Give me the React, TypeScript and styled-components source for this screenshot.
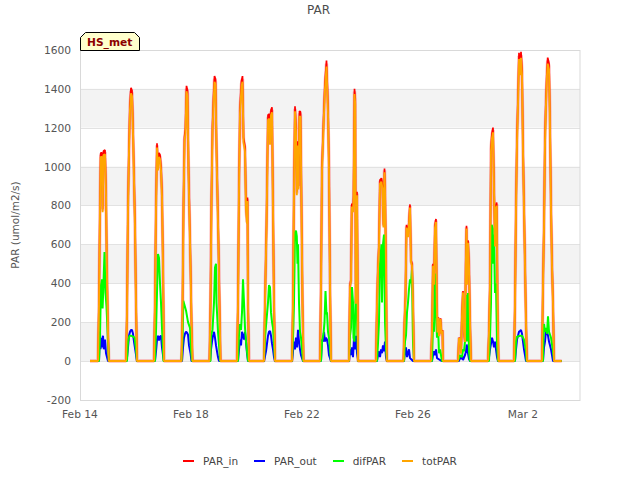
import React from "react";
import styled, { createGlobalStyle } from "styled-components";

const Global = createGlobalStyle`
  html, body { margin: 0; padding: 0; background: #fff; }
  #root { width: 640px; height: 480px; }
`;

const Page = styled.div`
  width: 640px;
  height: 480px;
  display: flex;
  flex-direction: column;
  overflow: hidden;
  font-family: "DejaVu Sans", sans-serif;
  color: #333;
`;

const Title = styled.h1`
  margin: 0;
  height: 20px;
  line-height: 20px;
  text-align: center;
  font-size: 12px;
  font-weight: 400;
  color: #4d4d4d;
  padding-right: 3px;
`;

const Chart = styled.svg`
  display: block;
  width: 640px;
  height: 430px;
  flex: none;
`;

const Tick = styled.text`
  font-family: "DejaVu Sans", sans-serif;
  font-size: 10.67px;
  fill: #555;
`;

const AxisTitle = styled.text`
  font-family: "DejaVu Sans", sans-serif;
  font-size: 10.5px;
  fill: #555;
`;

const TagLabel = styled.text`
  font-family: "DejaVu Sans", sans-serif;
  font-size: 10.67px;
  font-weight: 700;
  fill: #8b0000;
`;

const Legend = styled.ul`
  list-style: none;
  margin: 0;
  padding: 2px 0 0;
  display: flex;
  justify-content: center;
  gap: 16px;
  height: 28px;
  box-sizing: border-box;
  align-items: flex-start;
`;

const LegendItem = styled.li`
  display: flex;
  align-items: center;
  gap: 9px;
  font-size: 10.5px;
  line-height: 18px;
  color: #444;
`;

const Swatch = styled.span<{ $color: string }>`
  display: block;
  width: 11px;
  height: 2px;
  background: ${(p) => p.$color};
`;

const tot = [
  "98:0 99:300 100:800 100.7:1070 102:1070 102.6:780 103.5:1080 105:1085 106:870 106.8:500 108:150 108.8:0",
  "126:0 127:250 128:800 129:1100 130:1320 131:1405 132:1390 133:1200 134:950 135:700 136:300 137:0",
  "154:0 155:300 156:800 157:1120 158:1000 159:1070 160:1060 161:1000 162:860 163:500 164:0",
  "181.5:0 182.5:250 183.5:800 184.5:1150 185.5:1200 186.5:1415 187.5:1390 188.5:1000 189.5:750 190.5:500 191.5:200 192.5:0",
  "209.5:0 210.5:300 211.5:850 212.5:1200 213.5:1350 214.5:1465 215.5:1450 216.5:1100 217.5:850 218.5:600 219.5:300 220.5:0",
  "237:0 238:300 239:900 240:1300 241.5:1440 242.5:1465 243.5:1150 245:1100 246:800 247:720 247.5:840 248:300 249:0",
  "264:0 265:300 266.5:700 268:1265 269.5:1270 270:1135 271:1290 272:1305 273:800 274:300 275:0",
  "292:0 293:300 294:900 295:1310 296:1200 296.8:870 297.5:1130 298.5:900 299.5:1285 300.5:1280 301.5:800 302.5:300 303.5:0",
  "320:0 321:400 322:1000 324:1300 325:1430 326.5:1545 328:1300 329:1000 330:400 331:0",
  "349:0 350:390 351:420 351.8:810 353:780 353.6:850 354.5:1400 355.2:1350 355.8:300 356.5:500 357:870 357.5:500 358:0",
  "376:0 377:300 378:480 379:600 380:930 381.5:940 382.5:900 383.5:700 384.5:990 385:900 386:500 386.8:0",
  "403.5:0 404.5:200 405.5:340 406.5:700 408:650 409:720 410:805 411:520 412:500 413:300 414:0",
  "431:0 432:150 433:500 434:400 435:700 436:730 436.8:300 437.5:150 438.3:225 439:130 440.5:220 441.5:140 442.5:160 443:0",
  "458:0 459:120 460.5:110 461:40 462:240 463:360 464:150 465:100 465.8:500 466.5:695 467:400 468:620 469:500 470:200 471:0",
  "488:0 489:150 490:400 491:1100 492:1170 493:1200 494:900 495:600 496:800 496.7:815 497.5:300 498.5:0",
  "514:0 515:300 516:800 517:1150 518:1350 519:1585 520:1500 521:1590 522:1500 523:1100 524:800 525:500 526:200 527:0",
  "542:0 543:400 544:700 545:1150 546:1350 547:1500 547.7:1560 549:1530 549.8:1300 551:800 552:500 553:300 554:0",
];

const green = [
  "99:0 100:130 101:390 102:420 102.6:270 103.5:400 104.5:560 105.5:350 106.5:280 108:100 108.8:0",
  "127:0 128:100 129.5:130 131:130 133:125 134.5:120 136:60 137:0",
  "155:0 156:150 157:350 158:550 159:530 160:400 161:300 162:170 163.5:0",
  "181.5:0 182.5:100 183.3:310 186:260 188:200 190:170 191:60 192:0",
  "210.5:0 211:130 212.5:160 214:300 215:480 216:500 216.5:300 218:150 219.5:50 220:0",
  "238:0 239:130 240:190 241:160 242:250 243:420 244:300 245:170 246:100 248:0",
  "264:0 265:120 266:180 268:300 269:390 270:380 271:250 272:200 273:170 275:0",
  "292:0 293:120 294:300 295:660 296:670 296.8:640 297.5:500 298:600 299:300 300:150 301:120 303:0",
  "321:0 322:100 323.5:140 324.5:200 325.5:360 326.5:240 327:250 328:150 329:120 331:0",
  "349:0 350:130 351:170 352:380 353:300 353.5:120 354.5:100 355.5:300 356.5:380 357:250 358:0",
  "377:0 378:90 379:200 380:500 381.5:600 382:300 383:600 384:650 385:200 386:60 387:0",
  "404:0 405:100 406:130 407:250 408:300 409:370 410:420 411:400 412:470 413:100 414:0",
  "432:0 433:200 434:150 435:450 436:260 437:120 438:180 439:40 440:60 442:0",
  "458:0 460:30 462:20 463:60 464:50 465:100 466:300 466.5:340 467:100 468:350 469:50 470:0",
  "489:0 490:120 491:300 491.7:700 492.7:680 493:500 494:650 495:350 496:400 497:90 498:0",
  "515:0 516:100 517:125 520:130 522:130 524:110 526:50 526.5:0",
  "543:0 543.5:120 544:190 545:150 546:170 547:140 548:230 549:150 551:120 553:50 554:0",
];

const blue = [
  "99:0 100:150 100.5:60 101.3:120 102:70 103:130 103.8:60 105:110 106:40 107.5:10 108:0",
  "126.7:0 128:70 129:130 130:150 131:160 132:160 133:140 134:100 135.5:50 137:0",
  "155:0 156:50 157:110 158:130 159:105 160:125 161:130 162:70 163:30 164:0",
  "182:0 183:70 184:120 185:140 186:150 187:145 188:135 189:80 190.5:40 191.5:0",
  "210:0 211:60 212:100 213:130 214:150 215:120 216:80 217:50 218:20 219:0",
  "238:0 239:60 240:110 241:80 242:150 243:130 244:110 245:150 246:100 247:40 248:0",
  "264:0 266:50 267:90 268:130 269:150 270:155 271:130 272:90 273:60 274:20 275:0",
  "292:0 293:50 294:100 295:60 296:120 297:70 298:160 299:100 300:60 301:30 303:0",
  "321:0 322:110 323:100 324:150 325:100 326:120 327:110 328:80 329:30 331:0",
  "349:0 350:60 351:30 352:70 353:20 354:120 355:60 356:130 357:40 358:10 358.5:0",
  "377:0 378:30 379:50 380:20 381:60 382:40 383:80 384:50 385:100 386:20 387:0",
  "404:0 405:50 406:70 407:20 408:40 409:60 410:15 412:5 413:0",
  "432:0 433:30 434:50 435:30 436:60 437:15 440:5 442:0",
  "459:0 460:20 461:10 462:30 463:5 465:30 466:50 466.7:85 468:40 469:10 470:0",
  "488.5:0 490:60 491:90 492:120 493:100 494:70 495:100 496:60 497:20 498:0",
  "515:0 516:60 517:110 518:130 519:150 520:155 521:160 522:140 523:100 524:60 525:30 526:0",
  "543:0 544:70 545:100 546:160 547:150 548:130 549:100 551:60 552:30 553:0",
];

const yOf = (v: number) => 361 - v * 0.1945;

const toPath = (days: string[], scale = 1) => {
  const pts = days
    .join(" ")
    .split(" ")
    .map((p) => {
      const [x, v] = p.split(":").map(Number);
      return `${x},${yOf(v * scale).toFixed(1)}`;
    });
  return `M90,361 L${pts.join(" L")} L561.7,361`;
};

const yTicks = [1600, 1400, 1200, 1000, 800, 600, 400, 200, 0, -200];
const bands = [
  [1400, 1200],
  [1000, 800],
  [600, 400],
  [200, 0],
];
const xTicks: [number, string][] = [
  [80, "Feb 14"],
  [191, "Feb 18"],
  [302, "Feb 22"],
  [413, "Feb 26"],
  [523, "Mar 2"],
];

const series = [
  { name: "PAR_in", color: "#ff0000" },
  { name: "PAR_out", color: "#0000ff" },
  { name: "difPAR", color: "#00ff00" },
  { name: "totPAR", color: "#ffa500" },
];

export default function App() {
  return (
    <Page>
      <Global />
      <Title>PAR</Title>
      <Chart viewBox="0 20 640 430">
        {bands.map(([a, b]) => (
          <rect key={a} x={80} y={yOf(a)} width={500} height={yOf(b) - yOf(a)} fill="#f3f3f3" />
        ))}
        {yTicks.map((t) => (
          <line key={t} x1={80} x2={580} y1={Math.round(yOf(t)) + 0.5} y2={Math.round(yOf(t)) + 0.5} stroke="#e2e2e2" strokeWidth={1} />
        ))}
        <rect x={80.5} y={50.5} width={499.5} height={350} fill="none" stroke="#d9d9d9" strokeWidth={1} />
        {yTicks.map((t) => (
          <Tick key={t} x={71} y={yOf(t) + 4} textAnchor="end">
            {t}
          </Tick>
        ))}
        {xTicks.map(([x, label]) => (
          <Tick key={label} x={x} y={418} textAnchor="middle">
            {label}
          </Tick>
        ))}
        <AxisTitle x={0} y={0} textAnchor="middle" transform="translate(18.5 225) rotate(-90)">
          PAR (umol/m2/s)
        </AxisTitle>
        <path d={toPath(tot, 0.99)} fill="none" stroke="#ff0000" strokeWidth={3.4} strokeOpacity={0.28} strokeLinejoin="bevel" />
        <path d={toPath(tot)} fill="none" stroke="#ff0000" strokeWidth={1.7} strokeLinejoin="bevel" />
        <path d={toPath(blue)} fill="none" stroke="#0000ff" strokeWidth={2} strokeLinejoin="bevel" />
        <path d={toPath(green)} fill="none" stroke="#00ff00" strokeWidth={2} strokeLinejoin="bevel" />
        <path d={toPath(tot, 0.98)} fill="none" stroke="#ffa500" strokeWidth={1.9} strokeLinejoin="bevel" />
        <polygon points="80.5,50.5 80.5,37.5 85.5,32.5 134.5,32.5 139.5,37.5 139.5,50.5" fill="#ffffcc" stroke="#000" strokeWidth={1} />
        <TagLabel x={87} y={46}>
          HS_met
        </TagLabel>
      </Chart>
      <Legend>
        {series.map((s) => (
          <LegendItem key={s.name}>
            <Swatch $color={s.color} />
            {s.name}
          </LegendItem>
        ))}
      </Legend>
    </Page>
  );
}
